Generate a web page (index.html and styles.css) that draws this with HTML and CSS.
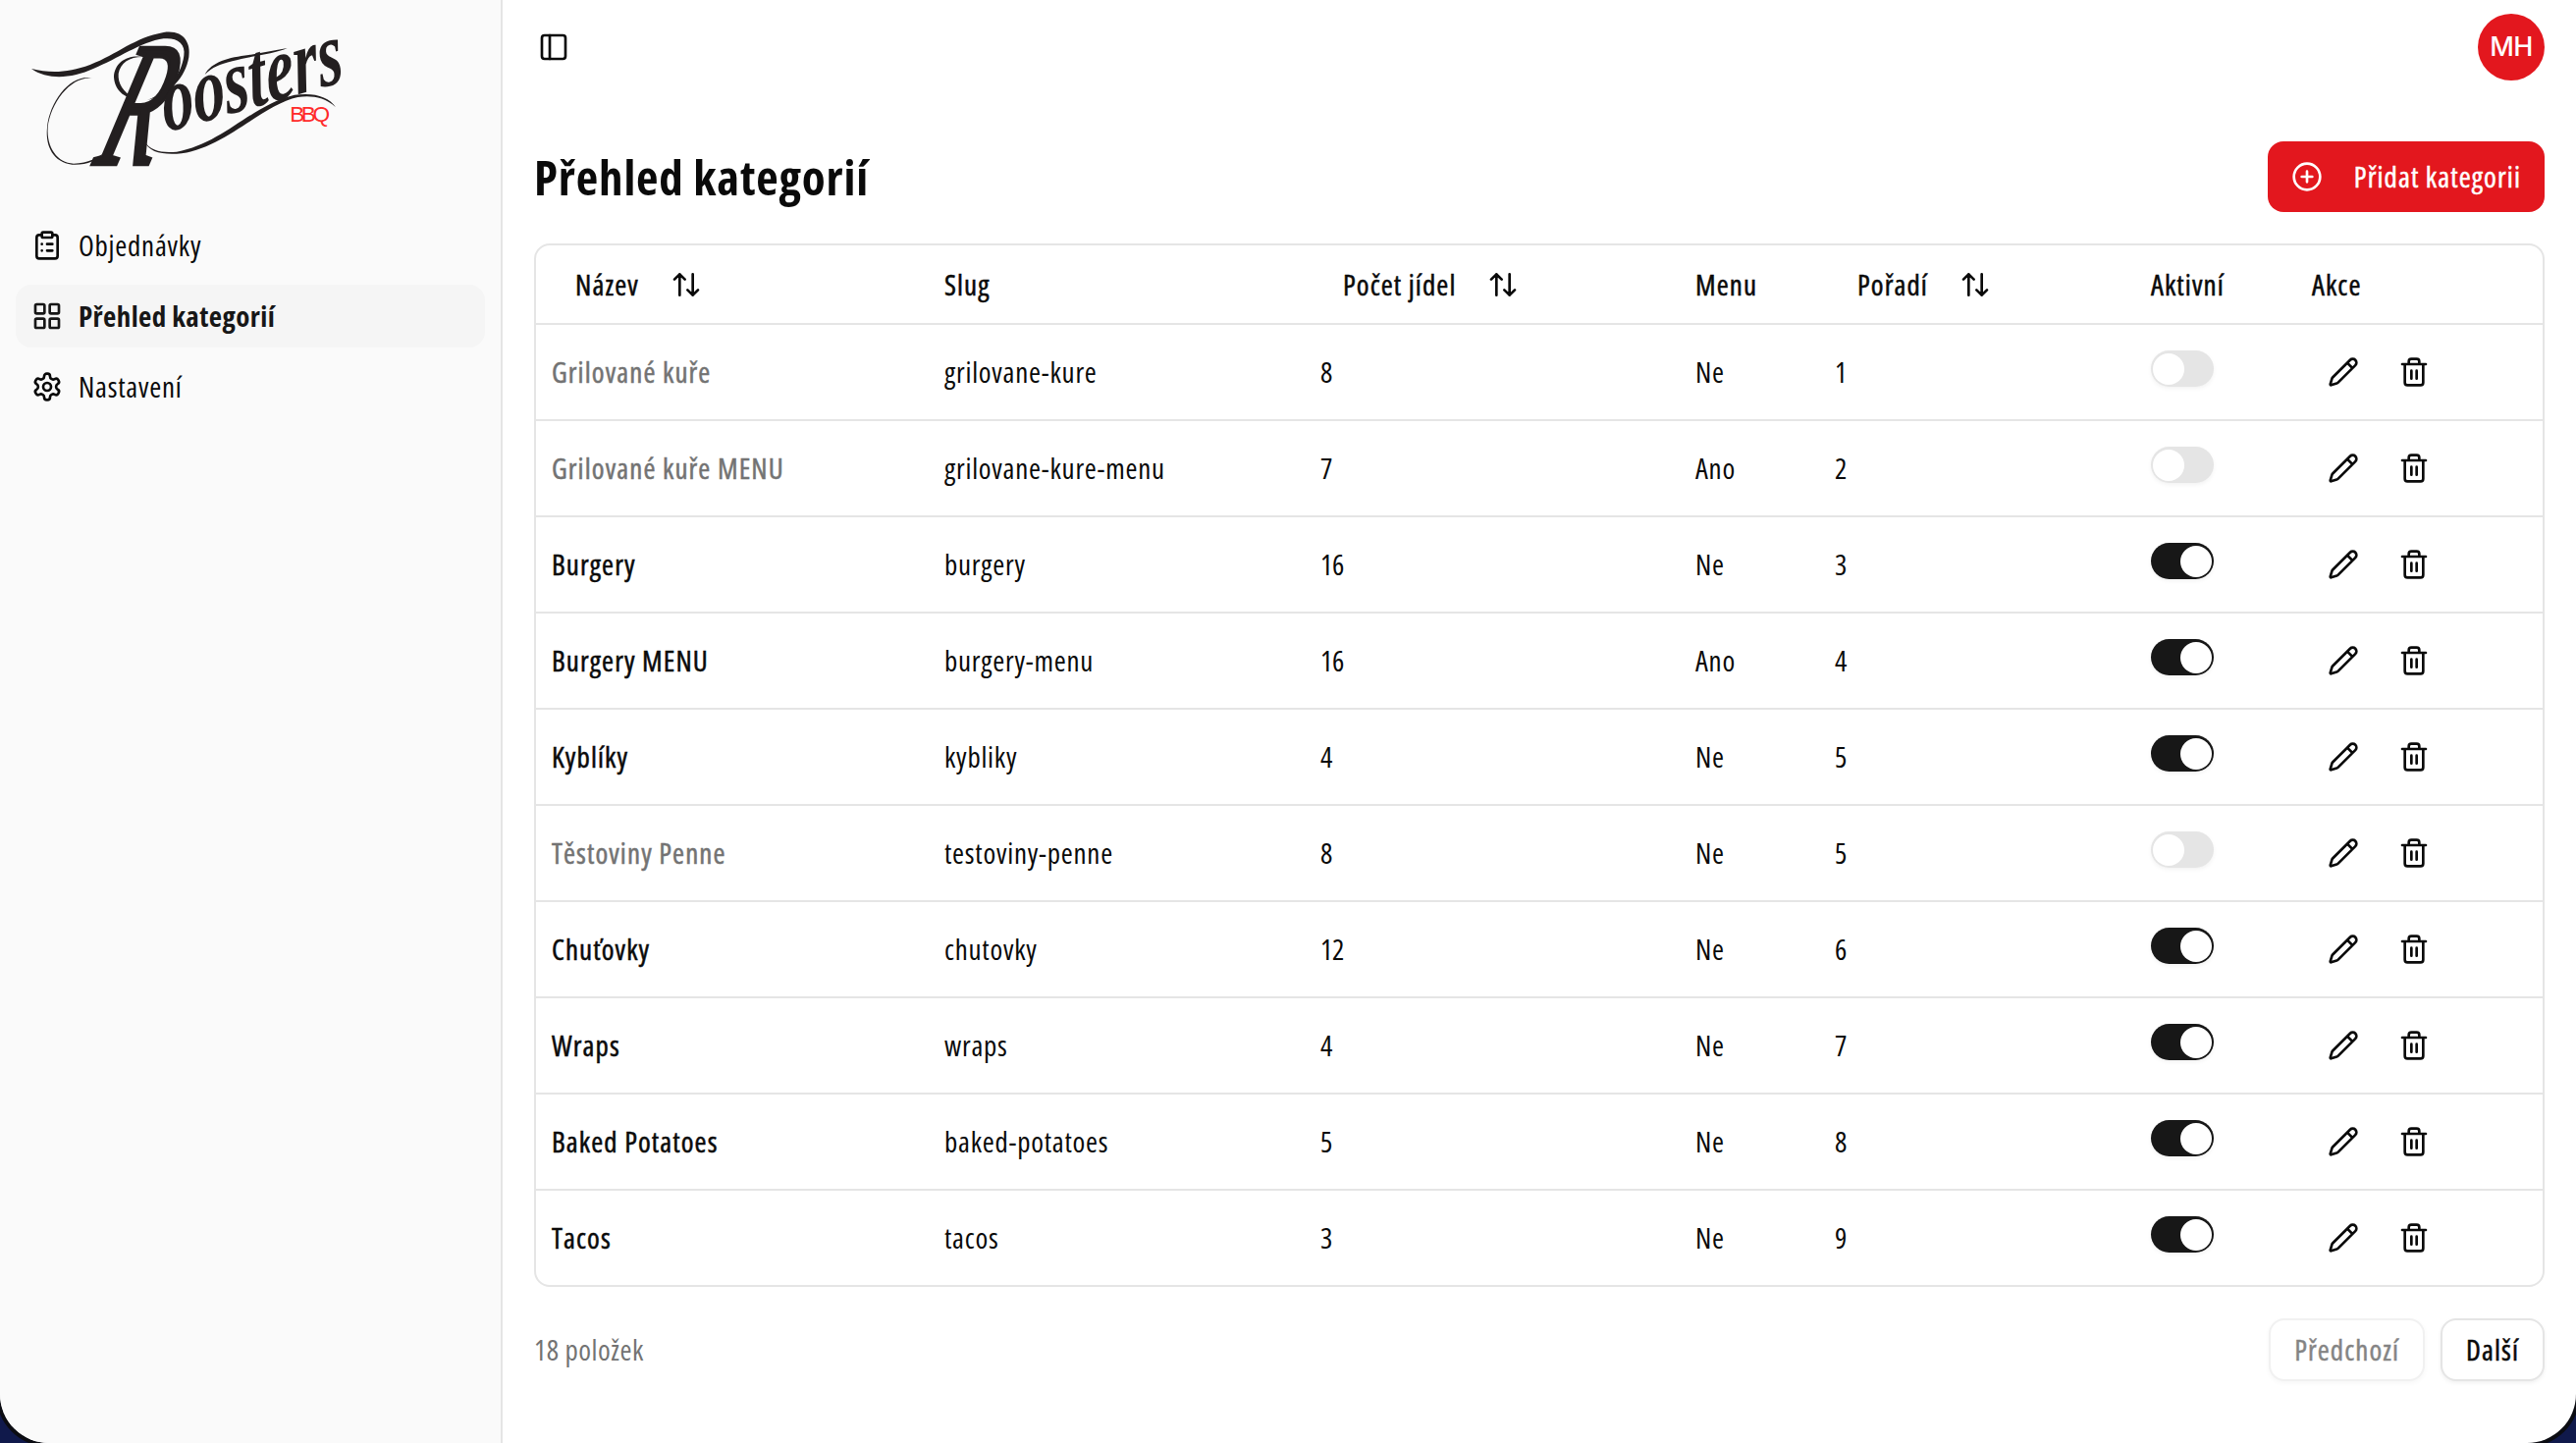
FILE: index.html
```html
<!DOCTYPE html>
<html lang="cs">
<head>
    <meta charset="UTF-8">
    <meta name="viewport" content="width=device-width, initial-scale=1.0">
    <title>Přehled kategorií</title>
    <link rel="stylesheet" href="styles.css">
</head>
<body>
    <!-- Icons -->
    <svg class="sprite">
        <symbol id="clipboard" viewBox="0 0 24 24"><rect x="8" y="2" width="8" height="4" rx="1"/><path d="M16 4h2a2 2 0 0 1 2 2v14a2 2 0 0 1-2 2H6a2 2 0 0 1-2-2V6a2 2 0 0 1 2-2h2M12 11h4M12 16h4M8 11h.01M8 16h.01"/></symbol>
        <symbol id="grid" viewBox="0 0 24 24"><rect x="3" y="3" width="7" height="7" rx="1"/><rect x="14" y="3" width="7" height="7" rx="1"/><rect x="14" y="14" width="7" height="7" rx="1"/><rect x="3" y="14" width="7" height="7" rx="1"/></symbol>
        <symbol id="settings" viewBox="0 0 24 24"><path d="M12.22 2h-.44a2 2 0 0 0-2 2v.18a2 2 0 0 1-1 1.73l-.43.25a2 2 0 0 1-2 0l-.15-.08a2 2 0 0 0-2.73.73l-.22.38a2 2 0 0 0 .73 2.73l.15.1a2 2 0 0 1 1 1.72v.51a2 2 0 0 1-1 1.74l-.15.09a2 2 0 0 0-.73 2.73l.22.38a2 2 0 0 0 2.73.73l.15-.08a2 2 0 0 1 2 0l.43.25a2 2 0 0 1 1 1.73V20a2 2 0 0 0 2 2h.44a2 2 0 0 0 2-2v-.18a2 2 0 0 1 1-1.73l.43-.25a2 2 0 0 1 2 0l.15.08a2 2 0 0 0 2.73-.73l.22-.39a2 2 0 0 0-.73-2.73l-.15-.08a2 2 0 0 1-1-1.74v-.5a2 2 0 0 1 1-1.74l.15-.09a2 2 0 0 0 .73-2.73l-.22-.38a2 2 0 0 0-2.73-.73l-.15.08a2 2 0 0 1-2 0l-.43-.25a2 2 0 0 1-1-1.73V4a2 2 0 0 0-2-2z"/><circle cx="12" cy="12" r="3"/></symbol>
        <symbol id="panel" viewBox="0 0 24 24"><rect x="3" y="3" width="18" height="18" rx="2"/><path d="M9 3v18"/></symbol>
        <symbol id="plus" viewBox="0 0 24 24"><circle cx="12" cy="12" r="10"/><path d="M8 12h8M12 8v8"/></symbol>
        <symbol id="sort" viewBox="0 0 24 24"><path d="m21 16-4 4-4-4M17 20V4M3 8l4-4 4 4M7 4v16"/></symbol>
        <symbol id="pencil" viewBox="0 0 24 24"><path d="M21.174 6.812a1 1 0 0 0-3.986-3.987L3.842 16.174a2 2 0 0 0-.5.83l-1.321 4.352a.5.5 0 0 0 .623.622l4.353-1.32a2 2 0 0 0 .83-.497zM15 5l4 4"/></symbol>
        <symbol id="trash" viewBox="0 0 24 24"><path d="M3 6h18M19 6v14a2 2 0 0 1-2 2H7a2 2 0 0 1-2-2V6M8 6V4a2 2 0 0 1 2-2h4a2 2 0 0 1 2 2v2M10 11v6M14 11v6"/></symbol>
    </svg>

    <div class="app">
        <aside class="sidebar">
            <svg class="logo" viewBox="0 0 1050 480">
                <path d="M36 150C95 165 150 162 215 138C300 105 350 55 440 39C500 30 524 70 517 115C507 175 460 230 390 246C450 222 494 170 502 110C508 72 480 54 440 58C370 68 300 120 225 150C160 180 85 185 36 150Z"/>
                <path d="M223 179C160 170 95 250 86 330C82 390 115 438 165 440C210 440 240 420 262 405C235 432 205 445 160 443C105 436 78 390 84 330C92 245 160 163 223 179Z"/>
                <path d="M380 370C400 404 440 408 480 404C620 380 710 260 840 230C900 222 945 235 966 268C930 235 890 232 850 237C740 260 620 400 480 410C430 412 395 405 380 370Z"/>
                <path d="M566 168C585 130 640 115 700 108L818 87C780 105 700 112 650 127C610 137 590 145 566 168Z"/>
                <path d="M380 114C330 105 290 130 288 175C290 215 320 240 350 240C315 220 300 195 302 165C308 130 340 112 380 114Z"/>
                <text class="logo-initial" transform="translate(222 442) skewX(-18) scale(.54 1)">R</text>
                <text class="logo-name" transform="translate(446 345) rotate(-16) skewX(-8)" textLength="572" lengthAdjust="spacingAndGlyphs">oosters</text>
                <text class="logo-bbq" x="826" y="311" textLength="122">BBQ</text>
            </svg>
            <nav class="nav">
                <a class="nav-item"><svg class="icon"><use href="#clipboard"/></svg><span>Objednávky</span></a>
                <a class="nav-item active"><svg class="icon"><use href="#grid"/></svg><span>Přehled kategorií</span></a>
                <a class="nav-item"><svg class="icon"><use href="#settings"/></svg><span>Nastavení</span></a>
            </nav>
        </aside>

        <main class="main">
            <header class="topbar">
                <svg class="icon"><use href="#panel"/></svg>
                <div class="avatar">MH</div>
            </header>

            <div class="page-head">
                <h1>Přehled kategorií</h1>
                <button class="btn-add"><svg class="icon"><use href="#plus"/></svg><span>Přidat kategorii</span></button>
            </div>

            <div class="table-wrap">
                <table>
                    <colgroup>
                        <col class="col-name"><col class="col-slug"><col class="col-count"><col class="col-menu"><col class="col-order"><col class="col-active"><col>
                    </colgroup>
                    <thead>
                        <tr>
                            <th><div class="sort"><span>Název</span><svg class="icon"><use href="#sort"/></svg></div></th>
                            <th>Slug</th>
                            <th><div class="sort"><span>Počet jídel</span><svg class="icon"><use href="#sort"/></svg></div></th>
                            <th>Menu</th>
                            <th><div class="sort"><span>Pořadí</span><svg class="icon"><use href="#sort"/></svg></div></th>
                            <th>Aktivní</th>
                            <th>Akce</th>
                        </tr>
                    </thead>
                    <tbody>
                        <tr>
                            <td class="name muted">Grilované kuře</td><td>grilovane-kure</td><td class="num">8</td><td>Ne</td><td class="num">1</td>
                            <td><div class="switch"></div></td>
                            <td><div class="actions"><svg class="icon"><use href="#pencil"/></svg><svg class="icon"><use href="#trash"/></svg></div></td>
                        </tr>
                        <tr>
                            <td class="name muted">Grilované kuře MENU</td><td>grilovane-kure-menu</td><td class="num">7</td><td>Ano</td><td class="num">2</td>
                            <td><div class="switch"></div></td>
                            <td><div class="actions"><svg class="icon"><use href="#pencil"/></svg><svg class="icon"><use href="#trash"/></svg></div></td>
                        </tr>
                        <tr>
                            <td class="name">Burgery</td><td>burgery</td><td class="num">16</td><td>Ne</td><td class="num">3</td>
                            <td><div class="switch on"></div></td>
                            <td><div class="actions"><svg class="icon"><use href="#pencil"/></svg><svg class="icon"><use href="#trash"/></svg></div></td>
                        </tr>
                        <tr>
                            <td class="name">Burgery MENU</td><td>burgery-menu</td><td class="num">16</td><td>Ano</td><td class="num">4</td>
                            <td><div class="switch on"></div></td>
                            <td><div class="actions"><svg class="icon"><use href="#pencil"/></svg><svg class="icon"><use href="#trash"/></svg></div></td>
                        </tr>
                        <tr>
                            <td class="name">Kyblíky</td><td>kybliky</td><td class="num">4</td><td>Ne</td><td class="num">5</td>
                            <td><div class="switch on"></div></td>
                            <td><div class="actions"><svg class="icon"><use href="#pencil"/></svg><svg class="icon"><use href="#trash"/></svg></div></td>
                        </tr>
                        <tr>
                            <td class="name muted">Těstoviny Penne</td><td>testoviny-penne</td><td class="num">8</td><td>Ne</td><td class="num">5</td>
                            <td><div class="switch"></div></td>
                            <td><div class="actions"><svg class="icon"><use href="#pencil"/></svg><svg class="icon"><use href="#trash"/></svg></div></td>
                        </tr>
                        <tr>
                            <td class="name">Chuťovky</td><td>chutovky</td><td class="num">12</td><td>Ne</td><td class="num">6</td>
                            <td><div class="switch on"></div></td>
                            <td><div class="actions"><svg class="icon"><use href="#pencil"/></svg><svg class="icon"><use href="#trash"/></svg></div></td>
                        </tr>
                        <tr>
                            <td class="name">Wraps</td><td>wraps</td><td class="num">4</td><td>Ne</td><td class="num">7</td>
                            <td><div class="switch on"></div></td>
                            <td><div class="actions"><svg class="icon"><use href="#pencil"/></svg><svg class="icon"><use href="#trash"/></svg></div></td>
                        </tr>
                        <tr>
                            <td class="name">Baked Potatoes</td><td>baked-potatoes</td><td class="num">5</td><td>Ne</td><td class="num">8</td>
                            <td><div class="switch on"></div></td>
                            <td><div class="actions"><svg class="icon"><use href="#pencil"/></svg><svg class="icon"><use href="#trash"/></svg></div></td>
                        </tr>
                        <tr>
                            <td class="name">Tacos</td><td>tacos</td><td class="num">3</td><td>Ne</td><td class="num">9</td>
                            <td><div class="switch on"></div></td>
                            <td><div class="actions"><svg class="icon"><use href="#pencil"/></svg><svg class="icon"><use href="#trash"/></svg></div></td>
                        </tr>
                    </tbody>
                </table>
            </div>

            <div class="footer">
                <span class="total">18 položek</span>
                <div class="pager">
                    <button class="btn-page" disabled>Předchozí</button>
                    <button class="btn-page">Další</button>
                </div>
            </div>
        </main>
    </div>
</body>
</html>
```
FILE: styles.css
```css
* {
    box-sizing: border-box;
}
body {
    margin: 0;
    background: #10194b;
    font-family: "Open Sans", "Noto Sans", sans-serif;
    font-stretch: 75%;
    font-size: 29px;
    line-height: 40px;
    letter-spacing: .75px;
    color: #0a0a0a;
    overflow: hidden;
}
button {
    font: inherit;
    color: inherit;
}
.sprite {
    display: none;
}
.icon {
    width: 32px;
    height: 32px;
    flex: none;
    fill: none;
    stroke: currentColor;
    stroke-width: 2;
    stroke-linecap: round;
    stroke-linejoin: round;
}
.app {
    display: flex;
    height: 1470px;
    background: #fff;
    border-radius: 0 0 50px 50px;
    box-shadow: 0 0 0 4px #0b0c12;
    overflow: hidden;
}

/* Sidebar */
.sidebar {
    width: 512px;
    flex: none;
    padding: 20px 16px;
    background: #fafafa;
    border-right: 2px solid #e5e5e5;
}
.logo {
    display: block;
    width: 350px;
    height: 160px;
    margin-left: 4px;
    fill: #231f20;
    letter-spacing: 0;
    overflow: visible;
}
.logo-initial {
    font: italic 540px "Liberation Serif", serif;
    stroke: #231f20;
    stroke-width: 14px;
}
.logo-name {
    font: italic bold 280px "Liberation Serif", serif;
}
.logo-bbq {
    font: 68px "Liberation Sans", sans-serif;
    fill: #ff2a2a;
}
.nav {
    display: flex;
    flex-direction: column;
    gap: 8px;
    margin-top: 38px;
}
.nav-item {
    display: flex;
    align-items: center;
    gap: 16px;
    height: 64px;
    padding: 0 16px;
    border-radius: 16px;
}
.nav-item.active {
    background: #f5f5f5;
    color: #171717;
    font-weight: 700;
    letter-spacing: .4px;
}

/* Content */
.main {
    flex: 1;
    padding: 0 32px;
}
.topbar {
    display: flex;
    align-items: center;
    justify-content: space-between;
    height: 96px;
    padding-left: 4px;
}
.avatar {
    width: 68px;
    height: 68px;
    border-radius: 50%;
    background: #e3171e;
    color: #fff;
    font: 500 27px/68px Inter, sans-serif;
    letter-spacing: -.5px;
    text-align: center;
}
.page-head {
    display: flex;
    align-items: center;
    justify-content: space-between;
    height: 72px;
    margin: 48px 0 32px;
}
h1 {
    margin: 0;
    font-size: 49px;
    font-weight: 700;
    letter-spacing: .85px;
}
.btn-add {
    display: flex;
    align-items: center;
    gap: 32px;
    height: 72px;
    padding: 0 24px;
    border: 0;
    border-radius: 16px;
    background: #e3171e;
    color: #fff;
}
/* the condensed face has no medium weight */
th, .name, .btn-add span, .btn-page {
    font-weight: 400;
    letter-spacing: 1.1px;
    -webkit-text-stroke: .5px currentColor;
}

/* Table */
.table-wrap {
    border: 2px solid #e5e5e5;
    border-radius: 16px;
}
table {
    width: 100%;
    table-layout: fixed;
    border-collapse: separate;
    border-spacing: 0;
}
.col-name { width: 400px; }
.col-slug { width: 382px; }
.col-count { width: 383px; }
.col-menu { width: 141px; }
.col-order { width: 323px; }
.col-active { width: 164px; }
th, td {
    padding: 0 16px;
    border-bottom: 2px solid #e5e5e5;
    text-align: left;
    white-space: nowrap;
}
th {
    height: 81px;
}
td {
    height: 98px;
}
tbody tr:last-child td {
    height: 96px;
    border-bottom: 0;
}
.num {
    padding-left: 17px;
    letter-spacing: -.3px;
}
.muted {
    color: #737373;
}
.sort {
    display: flex;
    align-items: center;
    gap: 32px;
    padding-left: 24px;
}
.switch {
    display: flex;
    align-items: center;
    width: 64px;
    height: 37px;
    margin-bottom: 7px;
    padding: 0 2px;
    border-radius: 19px;
    background: #e5e5e5;
    box-shadow: 0 2px 4px rgba(0, 0, 0, .05);
}
.switch::before {
    content: "";
    width: 32px;
    height: 32px;
    border-radius: 50%;
    background: #fff;
}
.switch.on {
    justify-content: flex-end;
    background: #171717;
}
.actions {
    display: flex;
    gap: 40px;
    padding-left: 16px;
}

/* Footer */
.footer {
    display: flex;
    align-items: center;
    justify-content: space-between;
    margin-top: 32px;
}
.total {
    color: #737373;
    letter-spacing: .5px;
}
.pager {
    display: flex;
    gap: 16px;
}
.btn-page {
    height: 64px;
    padding: 0 24px;
    border: 2px solid #e5e5e5;
    border-radius: 16px;
    background: #fff;
    box-shadow: 0 2px 4px rgba(0, 0, 0, .06);
}
.btn-page:disabled {
    opacity: .5;
}
```
